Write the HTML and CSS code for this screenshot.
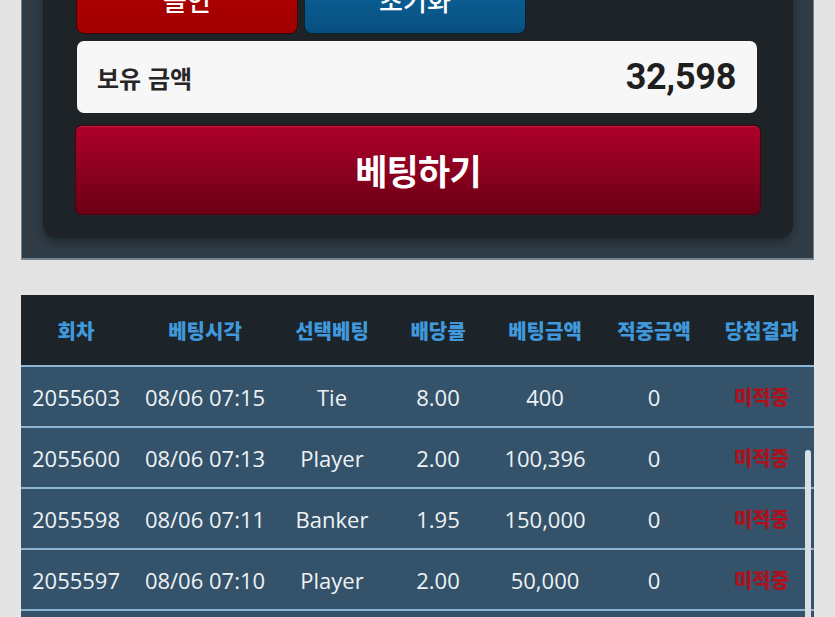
FILE: index.html
```html
<!DOCTYPE html>
<html lang="ko">
<head>
<meta charset="utf-8">
<title>베팅</title>
<link rel="stylesheet" href="styles.css">
</head>
<body>
<div class="page">
  <section class="bet-panel">
    <div class="bet-inner">
      <div class="quick-row">
        <button class="quick-btn quick-red">올인</button>
        <button class="quick-btn quick-blue">초기화</button>
      </div>
      <div class="balance">
        <span class="balance-label">보유 금액</span>
        <span class="balance-value">32,598</span>
      </div>
      <button class="bet-btn">베팅하기</button>
    </div>
  </section>

  <section class="history">
    <table class="history-table">
      <colgroup>
        <col class="c1"><col class="c2"><col class="c3"><col class="c4"><col class="c5"><col class="c6"><col class="c7">
      </colgroup>
      <thead>
        <tr>
          <th>회차</th><th>베팅시각</th><th>선택베팅</th><th>배당률</th><th>베팅금액</th><th>적중금액</th><th>당첨결과</th>
        </tr>
      </thead>
      <tbody>
        <tr><td>2055603</td><td>08/06 07:15</td><td>Tie</td><td>8.00</td><td>400</td><td>0</td><td class="lose">미적중</td></tr>
        <tr><td>2055600</td><td>08/06 07:13</td><td>Player</td><td>2.00</td><td>100,396</td><td>0</td><td class="lose">미적중</td></tr>
        <tr><td>2055598</td><td>08/06 07:11</td><td>Banker</td><td>1.95</td><td>150,000</td><td>0</td><td class="lose">미적중</td></tr>
        <tr><td>2055597</td><td>08/06 07:10</td><td>Player</td><td>2.00</td><td>50,000</td><td>0</td><td class="lose">미적중</td></tr>
        <tr><td>2055595</td><td>08/06 07:08</td><td>Banker</td><td>1.95</td><td>50,000</td><td>0</td><td class="lose">미적중</td></tr>
      </tbody>
    </table>
    <div class="scroll-thumb"></div>
  </section>
</div>
</body>
</html>
```

FILE: styles.css
```css
html, body {
  margin: 0;
  padding: 0;
  height: 100%;
  overflow: hidden;
}
body {
  background: #e4e4e4;
  font-family: "Noto Sans CJK KR", "Noto Sans", sans-serif;
}
.page {
  padding: 0 21px;
}
.bet-panel {
  margin-top: -76px;
  background: #2f3c46;
  border: 1px solid #74828d;
  border-top: none;
  border-bottom: 2px solid #76848f;
  padding: 20px 20px 20px 21px;
}
.bet-inner {
  background: #1e2327;
  border-radius: 14px;
  box-shadow: 0 4px 10px rgba(0, 0, 0, 0.35);
  padding: 20px 32px 23px 32px;
  display: flex;
  flex-direction: column;
}
.quick-row {
  display: flex;
  gap: 6px;
  padding-left: 1px;
}
.quick-btn {
  width: 222px;
  height: 70px;
  border-radius: 8px;
  color: #fff;
  font-family: "Noto Sans CJK KR", sans-serif;
  font-size: 26px;
  font-weight: 500;
  padding: 0;
  padding-top: 2px;
  line-height: 1;
}
.quick-red {
  background: linear-gradient(#b00000, #a30000);
  border: 1px solid #3d0606;
}
.quick-blue {
  background: linear-gradient(#0d6aa3, #084f80);
  border: 1px solid #062234;
}
.balance {
  margin: 7px 4px 0 2px;
  height: 72px;
  background: #f7f7f8;
  border-radius: 7px;
  display: flex;
  align-items: center;
  justify-content: space-between;
  padding: 0 21px 0 20px;
}
.balance-label {
  font-size: 24px;
  font-weight: 700;
  color: #262626;
}
.balance-value {
  font-family: Roboto, "Noto Sans", sans-serif;
  font-size: 36px;
  font-weight: 700;
  color: #1f1f1f;
  letter-spacing: -0.3px;
}
.bet-btn {
  margin-top: 12px;
  height: 90px;
  border-radius: 7px;
  border: 1px solid #4d0010;
  background: linear-gradient(#ad0029, #8c001f 50%, #6a0015);
  box-shadow: inset 0 1px 0 rgba(255, 120, 140, 0.25);
  color: #fff;
  font-family: "Noto Sans CJK KR", sans-serif;
  font-size: 35px;
  font-weight: 700;
  letter-spacing: -0.8px;
  padding: 0 0 2px;
}
.history {
  position: relative;
  margin-top: 35px;
}
.history-table {
  width: 100%;
  border-collapse: collapse;
  table-layout: fixed;
}
.c1 { width: 110px; }
.c2 { width: 148px; }
.c3 { width: 106px; }
.c4 { width: 106px; }
.c5 { width: 108px; }
.c6 { width: 110px; }
.c7 { width: 105px; }
.history-table th {
  background: #1c242a;
  color: #4099dc;
  font-family: "Noto Sans CJK KR", sans-serif;
  font-size: 20px;
  font-weight: 900;
  height: 70px;
  padding: 0;
  text-align: center;
}
.history-table td {
  background: #34526a;
  border-top: 2px solid #8cb6d6;
  height: 59px;
  padding: 0;
  text-align: center;
  color: #eef2f5;
  font-family: "Open Sans", "Noto Sans", sans-serif;
  font-size: 22px;
  white-space: nowrap;
}
.history-table td.lose {
  color: #ad111c;
  font-family: "Noto Sans CJK KR", sans-serif;
  font-size: 20px;
  font-weight: 900;
}
.scroll-thumb {
  position: absolute;
  top: 155px;
  right: 3px;
  width: 6px;
  height: 400px;
  background: #dadee1;
  border-radius: 3px;
}
```
